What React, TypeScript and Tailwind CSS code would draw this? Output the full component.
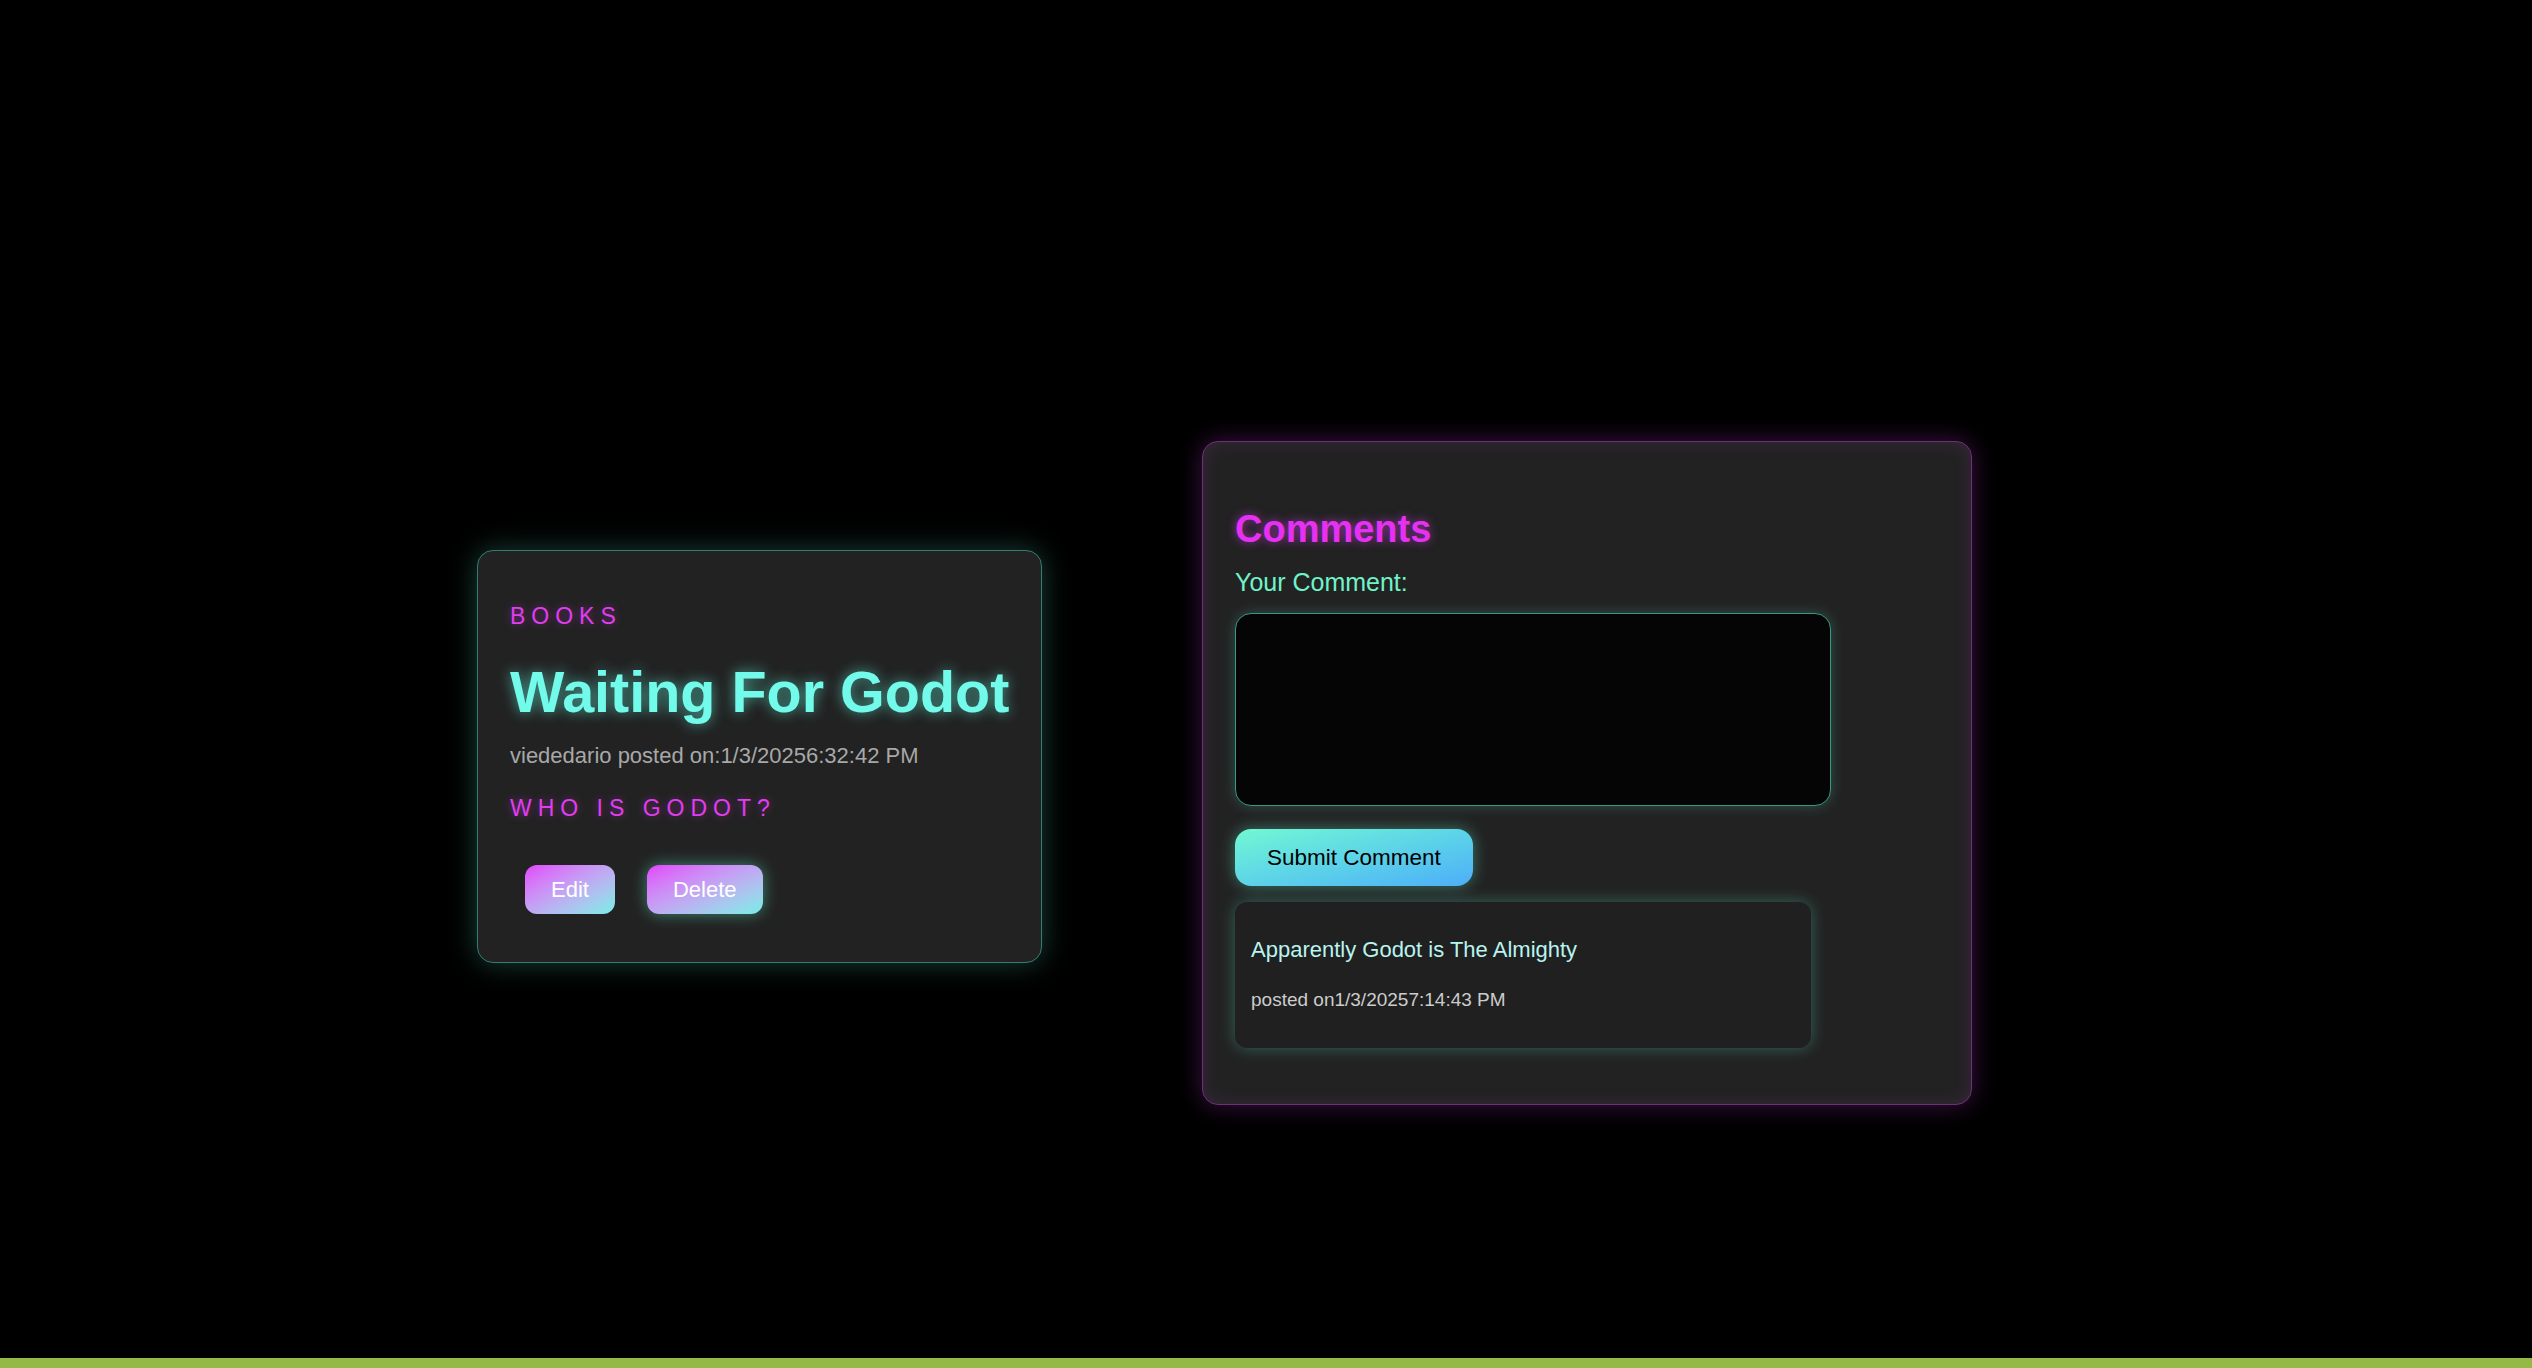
import React from "react";

export default function App() {
  const font = { fontFamily: '"Liberation Sans", Arial, Helvetica, sans-serif' };
  return (
    <div className="w-full bg-black" style={font}>
      <div className="h-[1358px] flex items-start pt-[441px] pl-[477px] gap-[160px] box-border">
        {/* Post card */}
        <div className="mt-[109px] w-[565px] rounded-[16px] border border-[#327c72] bg-[#222222] shadow-[0_0_28px_rgba(100,255,218,0.26)] px-8 pb-[48px] flex flex-col items-start box-border">
          <p className="mt-[51px] text-[23px] leading-[28px] tracking-[6px] text-[#e23cf0] [text-shadow:0_0_8px_rgba(224,64,251,0.45)]">
            BOOKS
          </p>
          <h1 className="mt-[29px] text-[57.5px] leading-[66px] font-bold text-[#72fbea] [text-shadow:0_0_14px_rgba(100,255,230,0.6)] whitespace-nowrap">
            Waiting For Godot
          </h1>
          <p className="mt-[18px] text-[22px] leading-[26px] text-[#a8a8a8] whitespace-nowrap">
            viededario posted on:1/3/20256:32:42 PM
          </p>
          <p className="mt-[25px] text-[23px] leading-[28px] tracking-[6px] text-[#e23cf0] [text-shadow:0_0_8px_rgba(224,64,251,0.45)] whitespace-nowrap">
            WHO IS GODOT?
          </p>
          <div className="mt-[43px] flex items-center">
            <button className="ml-[15px] h-[49px] px-[26px] rounded-[12px] bg-linear-to-br from-[#e040fb] to-[#72eee6] text-white text-[22px] leading-[26px]">
              Edit
            </button>
            <button className="ml-[32px] h-[49px] px-[26px] rounded-[12px] bg-linear-to-br from-[#e040fb] to-[#72eee6] text-white text-[22px] leading-[26px] shadow-[0_0_16px_rgba(100,255,218,0.45)]">
              Delete
            </button>
          </div>
        </div>

        {/* Comments card */}
        <div className="w-[770px] rounded-[16px] border border-[#6e3078] bg-[#222222] shadow-[0_0_24px_rgba(224,64,251,0.28),inset_0_0_18px_rgba(224,64,251,0.12)] pl-8 pb-[56px] flex flex-col items-start box-border">
          <h2 className="mt-[65px] text-[38px] leading-[44px] font-bold text-[#e631f2] [text-shadow:0_0_10px_rgba(224,64,251,0.6)]">
            Comments
          </h2>
          <label className="mt-[16px] text-[25px] leading-[30px] text-[#6ff3c8]">
            Your Comment:
          </label>
          <textarea className="mt-[16px] w-[596px] h-[193px] resize-none rounded-[16px] border border-[#3a9880] bg-[#050505] shadow-[0_0_14px_rgba(100,255,218,0.22)] outline-none" />
          <button className="mt-[23px] h-[57px] px-[32px] rounded-[16px] bg-linear-to-br from-[#72f8d2] to-[#4eaef8] text-black text-[22.5px] leading-[26px] shadow-[0_0_16px_rgba(100,255,218,0.4)] whitespace-nowrap">
            Submit Comment
          </button>
          <div className="mt-[16px] w-[576px] h-[146px] rounded-[12px] bg-[#202020] shadow-[0_0_16px_rgba(100,255,218,0.3)] px-4 flex flex-col items-start box-border">
            <p className="mt-[35px] text-[22px] leading-[26px] text-[#b8f4f0] whitespace-nowrap">
              Apparently Godot is The Almighty
            </p>
            <p className="mt-[26px] text-[19px] leading-[22px] text-[#cccccc] whitespace-nowrap">
              posted on1/3/20257:14:43 PM
            </p>
          </div>
        </div>
      </div>
      <div className="h-[10px] bg-[#94b944]" />
    </div>
  );
}
